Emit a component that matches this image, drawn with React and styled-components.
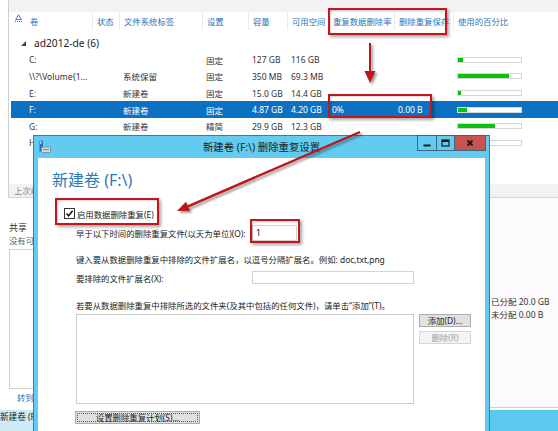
import React from 'react';
import styled, { createGlobalStyle } from 'styled-components';

const GlobalStyle = createGlobalStyle`
  html, body {
    margin: 0;
    padding: 0;
    background: #fff;
  }
  body {
    font-family: "Noto Sans", "Noto Sans CJK SC", sans-serif;
    color: #333;
  }
  * {
    box-sizing: border-box;
  }
`;

// the last row sits under the dialog: only its name and bar show
const volumes = [
  { name: 'C:', label: '', setting: '固定', cap: '127 GB', free: '116 GB', capN: 127, freeN: 116 },
  { name: '\\\\?\\Volume{1...', label: '系统保留', setting: '固定', cap: '350 MB', free: '69.3 MB', capN: 350, freeN: 69.3 },
  { name: 'E:', label: '新建卷', setting: '固定', cap: '15.0 GB', free: '14.4 GB', capN: 15, freeN: 14.4 },
  { name: 'F:', label: '新建卷', setting: '固定', cap: '4.87 GB', free: '4.20 GB', rate: '0%', saved: '0.00 B', capN: 4.87, freeN: 4.2, selected: true },
  { name: 'G:', label: '新建卷', setting: '精简', cap: '29.9 GB', free: '12.3 GB', capN: 29.9, freeN: 12.3 },
  { name: 'H:', label: '', setting: '', cap: '', free: '', capN: 10, freeN: 8.1 },
];

const headers = ['卷', '状态', '文件系统标签', '设置', '容量', '可用空间', '重复数据删除率', '删除重复保存', '使用的百分比'];

const Screen = styled.div`
  position: relative;
  width: 558px;
  height: 431px;
  overflow: hidden;
  display: flex;
  flex-direction: column;
`;

/* ---------- volume list behind the dialog ---------- */

const VolumePanel = styled.div`
  height: 198px;
  margin-left: 8px;
  border-left: 1px solid #cfcfcf;
  display: flex;
  flex-direction: column;
`;

const TopStrip = styled.div`
  height: 12px;
  background: #f2f2f2;
`;

const HeaderRow = styled.div`
  display: grid;
  grid-template-columns: 17px 67px 27px 83px 46px 39px 41px 66px 59px 1fr;
  height: 18px;
  font-size: 8.4px;
  color: #2f74b5;
`;

const HeaderCell = styled.div`
  display: flex;
  align-items: center;
  padding-left: 4px;
  white-space: nowrap;
  overflow: hidden;
  border-right: 1px solid ${p => (p.$last ? 'transparent' : '#ebebeb')};
`;

const SortCell = styled.div`
  display: flex;
  align-items: flex-start;
  padding: 2px 0 0 6px;
`;

const GroupRow = styled.div`
  height: 21.6px;
  padding: 5px 0 0 12px;
  display: flex;
  align-items: center;
  gap: 8px;
  font-size: 10.2px;
  color: #222;
`;

const Row = styled.div`
  display: grid;
  grid-template-columns: 15px 67px 27px 83px 46px 39px 41px 66px 59px 1fr;
  height: 16.6px;
  margin-left: 2px;
  align-items: center;
  font-size: 8.5px;
  background: ${p => (p.$selected ? '#0c71c3' : 'transparent')};
  color: ${p => (p.$selected ? '#fff' : '#333')};
`;

const Cell = styled.div`
  padding-left: 3px;
  white-space: nowrap;
  overflow: hidden;
`;

const UsageBar = styled.div`
  margin-left: 3px;
  width: 65px;
  height: 6px;
  border: 1px solid #d6d6d6;
  background: #fff;
`;

const UsageFill = styled.div`
  height: 100%;
  background: #0bc10b;
`;

const Spacer = styled.div`
  flex: 1;
`;

const Footer = styled.div`
  height: 14px;
  background: #f3f2f3;
  border-bottom: 1px solid #d5d5d5;
  padding-left: 5px;
  font-size: 8.4px;
  line-height: 13px;
  color: #8a8a8a;
`;

/* ---------- lower panels ---------- */

const Lower = styled.div`
  height: 212px;
  display: flex;
`;

const SharePanel = styled.div`
  width: 280px;
  padding: 23px 0 0 9px;
  display: flex;
  flex-direction: column;
`;

const ShareTitle = styled.div`
  font-size: 9px;
  line-height: 13px;
  color: #333;
`;

const ShareNote = styled.div`
  font-size: 8.4px;
  line-height: 13px;
  color: #666;
`;

const ShareBox = styled.div`
  margin-top: 2px;
  height: 140px;
  border: 1px solid #cfcfcf;
`;

const GoLink = styled.div`
  margin-top: 3px;
  padding-left: 8px;
  font-size: 8.4px;
  line-height: 12px;
  color: #2f74b5;
`;

const DiskPanel = styled.div`
  flex: 1;
  height: 210px;
  background: #fcfafc;
  border-bottom: 1px solid #cfcfcf;
  display: flex;
  justify-content: flex-end;
  padding-top: 97px;
`;

const Legend = styled.div`
  width: 67px;
  font-size: 8.5px;
  line-height: 13px;
  color: #333;
  white-space: nowrap;
`;

const Taskbar = styled.div`
  height: 21px;
  background: #5cc8ee;
  display: flex;
`;

const TaskButton = styled.div`
  width: 150px;
  background: #cfe9f7;
  font-size: 8.6px;
  line-height: 15px;
  color: #222;
  white-space: nowrap;
`;

/* ---------- dialog ---------- */

const Dialog = styled.div`
  position: absolute;
  left: 33px;
  top: 135px;
  width: 457px;
  height: 320px;
  background: #62cbef;
  border: 1px solid #4b7791;
  display: flex;
  flex-direction: column;
  z-index: 2;
`;

const TitleBar = styled.div`
  height: 22px;
  display: grid;
  grid-template-columns: 1fr auto 1fr;
  align-items: start;
`;

const IconBox = styled.div`
  margin: 4px 0 0 5px;
  line-height: 0;
`;

const TitleText = styled.div`
  font-size: 10.4px;
  line-height: 22px;
  color: #1b1b1b;
  white-space: nowrap;
`;

const CaptionGroup = styled.div`
  justify-self: end;
  display: flex;
  margin: -1px 3px 0 0;
  height: 16px;
  border: 1px solid #3d6580;
`;

const CapButton = styled.div`
  width: ${p => p.$w}px;
  height: 100%;
  display: flex;
  align-items: center;
  justify-content: center;
  background: ${p => (p.$close ? '#c9534f' : '#62cbef')};
  border-left: ${p => (p.$sep ? '1px solid #3d6580' : 'none')};
`;

const DialogBody = styled.div`
  flex: 1;
  margin: 0 4px;
  background: #fff;
  padding-top: 12px;
  display: flex;
  flex-direction: column;
  font-size: 8.4px;
  color: #222;
`;

const Heading = styled.div`
  margin-left: 14px;
  font-size: 16px;
  line-height: 20px;
  color: #2a7ab8;
`;

const CheckRow = styled.div`
  margin: 17px 0 0 26px;
  height: 13px;
  display: flex;
  align-items: center;
  gap: 2px;
`;

const CheckBox = styled.div`
  width: 11px;
  height: 11px;
  border: 1px solid #333;
  background: #fff;
  display: flex;
  align-items: center;
  justify-content: center;
`;

const FormBlock = styled.div`
  margin-left: 38px;
  display: flex;
  flex-direction: column;
`;

const FieldRow = styled.div`
  margin-top: ${p => p.$mt}px;
  height: ${p => p.$h}px;
  display: flex;
  align-items: center;
`;

const FieldLabel = styled.div`
  width: 176px;
  white-space: nowrap;
`;

const TextInput = styled.div`
  width: ${p => p.$w}px;
  height: 100%;
  border: 1px solid #d3d3d3;
  background: #fff;
  padding-left: 3px;
  font-size: 8.6px;
  line-height: 14px;
  color: #111;
`;

const Hint = styled.div`
  margin-top: ${p => p.$mt}px;
  line-height: 12px;
  white-space: nowrap;
`;

const ListRow = styled.div`
  margin-top: 2px;
  display: flex;
  gap: 5px;
`;

const ListBox = styled.div`
  width: 338px;
  height: 90px;
  border: 1px solid #cdcdcd;
  background: #fff;
`;

const SideButtons = styled.div`
  display: flex;
  flex-direction: column;
  gap: 4px;
`;

const Button = styled.div`
  width: ${p => p.$w}px;
  height: 13px;
  border: 1px solid ${p => (p.$disabled ? '#d5d5d5' : '#adadad')};
  background: ${p => (p.$disabled ? '#f4f4f4' : '#e1e1e1')};
  color: ${p => (p.$disabled ? '#a0a0a0' : '#222')};
  font-size: 8.4px;
  line-height: 11px;
  text-align: center;
  white-space: nowrap;
`;

const ScheduleButton = styled(Button)`
  margin: 7px 0 0 -1px;
  outline: 1px dotted #555;
  outline-offset: -3px;
`;

/* ---------- annotations ---------- */

const Mark = styled.div`
  position: absolute;
  left: ${p => p.$x}px;
  top: ${p => p.$y}px;
  width: ${p => p.$w}px;
  height: ${p => p.$h}px;
  border: 2px solid #c4161c;
  box-shadow: 2px 2px 3px rgba(0, 0, 0, 0.35), inset 1px 1px 2px rgba(0, 0, 0, 0.18);
  z-index: 5;
  pointer-events: none;
`;

const Overlay = styled.svg`
  position: absolute;
  left: 0;
  top: 0;
  z-index: 6;
  pointer-events: none;
`;

const SortIcon = () => (
  <svg width="7" height="8" viewBox="0 0 7 8">
    <path d="M3.5 0.8 L6.4 5.6 H0.6 Z" fill="none" stroke="#3a7bc0" strokeWidth="1" />
    <path d="M0 7.5 H7" stroke="#3a7bc0" strokeWidth="1" strokeDasharray="1 1" />
  </svg>
);

const GroupArrow = () => (
  <svg width="5" height="5" viewBox="0 0 5 5">
    <path d="M5 0 V5 H0 Z" fill="#444" />
  </svg>
);

const VolumeIcon = () => (
  <svg width="12" height="13" viewBox="0 0 12 13">
    <rect x="0.5" y="0.5" width="3.5" height="11" fill="#2c6ec6" />
    <rect x="1" y="1" width="1.5" height="3" fill="#9fd0ff" />
    <rect x="2.5" y="7" width="9" height="5.5" rx="1" fill="#d3d8dc" stroke="#78808a" strokeWidth="0.8" />
    <rect x="4" y="9" width="6" height="1.2" fill="#8a939c" />
  </svg>
);

const MinGlyph = () => (
  <svg width="8" height="8" viewBox="0 0 8 8">
    <rect x="0.5" y="5.5" width="7" height="2" fill="#1a1a1a" />
  </svg>
);

const MaxGlyph = () => (
  <svg width="9" height="8" viewBox="0 0 9 8">
    <rect x="1" y="1" width="7" height="6" fill="none" stroke="#1a1a1a" strokeWidth="1.2" />
    <rect x="1" y="1" width="7" height="2" fill="#1a1a1a" />
  </svg>
);

const CloseGlyph = () => (
  <svg width="8" height="8" viewBox="0 0 8 8">
    <path d="M1.5 1.5 L6.5 6.5 M6.5 1.5 L1.5 6.5" stroke="#1a1a1a" strokeWidth="1.8" />
  </svg>
);

const Check = () => (
  <svg width="9" height="9" viewBox="0 0 9 9">
    <path d="M1.5 4.6 L3.6 6.8 L7.6 1.8" fill="none" stroke="#111" strokeWidth="1.5" />
  </svg>
);

const Arrows = () => (
  <Overlay width="558" height="431" viewBox="0 0 558 431">
    <defs>
      <filter id="shade" x="-20%" y="-20%" width="140%" height="140%">
        <feDropShadow dx="2" dy="2" stdDeviation="1.3" floodColor="#000" floodOpacity="0.4" />
      </filter>
    </defs>
    <g filter="url(#shade)" fill="#bd1419" stroke="#bd1419">
      <line x1="370" y1="43" x2="370" y2="72" strokeWidth="2" />
      <polygon points="364.5,71 375.5,71 370,83" stroke="none" />
      <line x1="360" y1="132" x2="188" y2="206.3" strokeWidth="2.4" />
      <polygon points="177,211 190,210.8 186,201.7" stroke="none" />
    </g>
  </Overlay>
);

const usage = v => ((v.capN - v.freeN) / v.capN) * 100;

export default function App() {
  return (
    <Screen>
      <GlobalStyle />
      <VolumePanel>
        <TopStrip />
        <HeaderRow>
          <SortCell>
            <SortIcon />
          </SortCell>
          {headers.map((h, i) => (
            <HeaderCell key={h} $last={i === headers.length - 1}>
              {h}
            </HeaderCell>
          ))}
        </HeaderRow>
        <GroupRow>
          <GroupArrow />
          <span>ad2012-de (6)</span>
        </GroupRow>
        {volumes.map(v => (
          <Row key={v.name} $selected={v.selected}>
            <span />
            <Cell>{v.name}</Cell>
            <Cell />
            <Cell>{v.label}</Cell>
            <Cell>{v.setting}</Cell>
            <Cell>{v.cap}</Cell>
            <Cell>{v.free}</Cell>
            <Cell>{v.rate || ''}</Cell>
            <Cell>{v.saved || ''}</Cell>
            <UsageBar>
              <UsageFill style={{ width: `${usage(v)}%` }} />
            </UsageBar>
          </Row>
        ))}
        <Spacer />
        <Footer>上次刷新时间为 2012/9/6 10:32:15</Footer>
      </VolumePanel>

      <Lower>
        <SharePanel>
          <ShareTitle>共享</ShareTitle>
          <ShareNote>没有可用的共享。</ShareNote>
          <ShareBox />
          <GoLink>转到共享概述 &gt;</GoLink>
        </SharePanel>
        <DiskPanel>
          <Legend>
            <div>已分配 20.0 GB</div>
            <div>未分配 0.00 B</div>
          </Legend>
        </DiskPanel>
      </Lower>

      <Taskbar>
        <TaskButton>新建卷 (F:\) 删除重复设置</TaskButton>
      </Taskbar>

      <Dialog>
        <TitleBar>
          <IconBox>
            <VolumeIcon />
          </IconBox>
          <TitleText>新建卷 (F:\) 删除重复设置</TitleText>
          <CaptionGroup>
            <CapButton $w={18}>
              <MinGlyph />
            </CapButton>
            <CapButton $w={18} $sep>
              <MaxGlyph />
            </CapButton>
            <CapButton $w={31} $sep $close>
              <CloseGlyph />
            </CapButton>
          </CaptionGroup>
        </TitleBar>
        <DialogBody>
          <Heading>新建卷 (F:\)</Heading>
          <CheckRow>
            <CheckBox>
              <Check />
            </CheckBox>
            <span>启用数据删除重复(E)</span>
          </CheckRow>
          <FormBlock>
            <FieldRow $mt={5} $h={16}>
              <FieldLabel>早于以下时间的删除重复文件(以天为单位)(O):</FieldLabel>
              <TextInput $w={45}>1</TextInput>
            </FieldRow>
            <Hint $mt={13}>键入要从数据删除重复中排除的文件扩展名，以逗号分隔扩展名。例如: doc,txt,png</Hint>
            <FieldRow $mt={5} $h={13}>
              <FieldLabel>要排除的文件扩展名(X):</FieldLabel>
              <TextInput $w={162} />
            </FieldRow>
            <Hint $mt={16}>若要从数据删除重复中排除所选的文件夹(及其中包括的任何文件)，请单击“添加”(T)。</Hint>
            <ListRow>
              <ListBox />
              <SideButtons>
                <Button $w={52}>添加(D)...</Button>
                <Button $w={52} $disabled>删除(R)</Button>
              </SideButtons>
            </ListRow>
            <ScheduleButton $w={125}>设置删除重复计划(S)...</ScheduleButton>
          </FormBlock>
        </DialogBody>
      </Dialog>

      <Mark $x={328} $y={8} $w={119} $h={27} />
      <Mark $x={328} $y={94} $w={104} $h={24} />
      <Mark $x={55} $y={198} $w={104} $h={27} />
      <Mark $x={250} $y={219} $w={50} $h={24} />
      <Arrows />
    </Screen>
  );
}
